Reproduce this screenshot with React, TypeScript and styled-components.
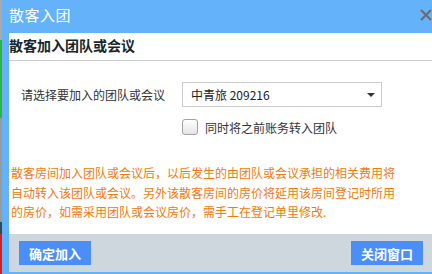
import * as React from 'react';
import styled, { createGlobalStyle } from 'styled-components';

const GlobalStyle = createGlobalStyle`
  html, body {
    margin: 0;
    padding: 0;
    background: #9c9c9c;
  }
  body {
    font-family: "Noto Sans CJK SC", "Noto Sans", sans-serif;
  }
`;

const Page = styled.div`
  display: flex;
  width: 432px;
  height: 274px;
  overflow: hidden;
`;

const Backdrop = styled.div`
  width: 2px;
  flex-shrink: 0;
  background: linear-gradient(
    to bottom,
    #a9a9a9 0px,
    #a9a9a9 40px,
    #2fb53a 40px,
    #2fb53a 118px,
    #9a9a9a 118px,
    #9a9a9a 222px,
    #2b4c55 222px,
    #2b4c55 234px,
    #d62020 234px
  );
`;

const Window = styled.div`
  flex: 1;
  display: flex;
  flex-direction: column;
  border-left: 7px solid #64b2f9;
  border-bottom: 2px solid #64b2f9;
  background: #fff;
  min-width: 0;
`;

const TitleBar = styled.div`
  height: 33px;
  flex-shrink: 0;
  display: flex;
  align-items: center;
  justify-content: space-between;
  background: #64b2f9;
  color: #fff;
  font-size: 15px;
  letter-spacing: 0.5px;
`;

const TitleText = styled.span`
  line-height: 20px;
  margin-top: -3px;
`;

const CloseIcon = styled.svg`
  width: 12px;
  height: 12px;
  margin-top: -4px;
  flex-shrink: 0;
`;

const Body = styled.div`
  flex: 1;
  display: flex;
  flex-direction: column;
`;

const Header = styled.div`
  height: 27px;
  line-height: 24px;
  border-bottom: 1px solid #cdcdcd;
  font-size: 14px;
  font-weight: bold;
  color: #16262e;
`;

const Form = styled.div`
  display: grid;
  grid-template-columns: 161px 200px;
  row-gap: 12px;
  align-items: center;
  padding: 21px 0 0 12px;
`;

const Label = styled.span`
  font-size: 12px;
  color: #333;
`;

const SelectBox = styled.div`
  box-sizing: border-box;
  height: 25px;
  display: flex;
  align-items: center;
  justify-content: space-between;
  padding: 0 6px 0 8px;
  border: 1px solid #cccccc;
  font-size: 12px;
  color: #222;
`;

const Caret = styled.span`
  width: 0;
  height: 0;
  border-left: 4px solid transparent;
  border-right: 4px solid transparent;
  border-top: 4px solid #333;
`;

const CheckRow = styled.label`
  grid-column: 2;
  display: flex;
  align-items: center;
  gap: 7px;
  font-size: 12px;
  color: #333;
  height: 16px;
`;

const CheckBox = styled.span`
  box-sizing: border-box;
  width: 16px;
  height: 16px;
  border: 1px solid #a3a3a3;
  border-radius: 3px;
  background: linear-gradient(to bottom, #ffffff, #e4e4e4);
`;

const Notice = styled.p`
  margin: 28px 0 0 2px;
  width: 392px;
  font-size: 12px;
  line-height: 19.5px;
  color: #f27a0c;
`;

const Footer = styled.div`
  margin-top: auto;
  height: 38px;
  flex-shrink: 0;
  box-sizing: border-box;
  display: flex;
  align-items: center;
  justify-content: space-between;
  padding: 0 9px 0 10px;
  background: #cfd7de;
`;

const Button = styled.button`
  width: 72px;
  height: 24px;
  padding: 0;
  border: none;
  background: #4b8ef7;
  color: #fff;
  font-family: inherit;
  font-size: 13px;
  font-weight: bold;
  cursor: pointer;
`;

export default function App() {
  return (
    <Page>
      <GlobalStyle />
      <Backdrop />
      <Window>
        <TitleBar>
          <TitleText>散客入团</TitleText>
          <CloseIcon viewBox="0 0 12 12">
            <path d="M1 1 L11 11 M11 1 L1 11" stroke="#6b6b6b" strokeWidth="2" fill="none" />
          </CloseIcon>
        </TitleBar>
        <Body>
          <Header>散客加入团队或会议</Header>
          <Form>
            <Label>请选择要加入的团队或会议</Label>
            <SelectBox>
              <span>中青旅 209216</span>
              <Caret />
            </SelectBox>
            <CheckRow>
              <CheckBox />
              同时将之前账务转入团队
            </CheckRow>
          </Form>
          <Notice>
            散客房间加入团队或会议后，以后发生的由团队或会议承担的相关费用将自动转入该团队或会议。另外该散客房间的房价将延用该房间登记时所用的房价，如需采用团队或会议房价，需手工在登记单里修改.
          </Notice>
          <Footer>
            <Button>确定加入</Button>
            <Button>关闭窗口</Button>
          </Footer>
        </Body>
      </Window>
    </Page>
  );
}
